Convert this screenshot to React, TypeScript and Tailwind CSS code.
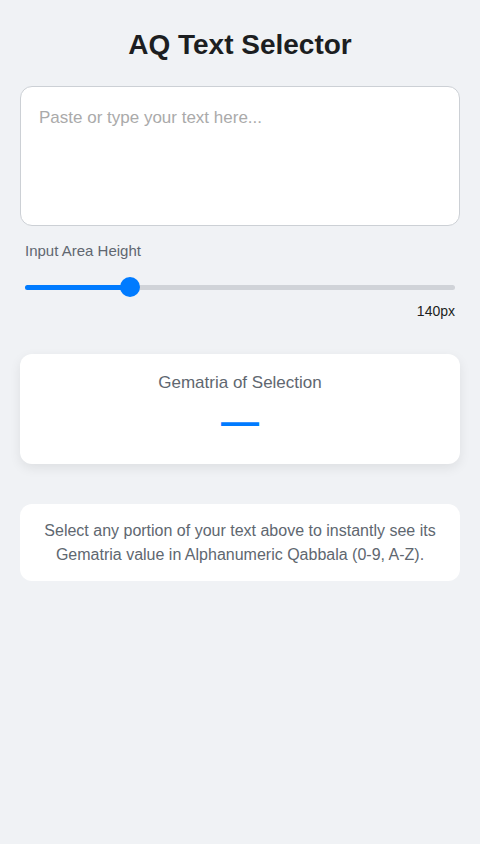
import { useState } from "react";

const MIN = 50;
const MAX = 418;

export default function App() {
  const [height, setHeight] = useState(140);
  const pct = ((height - MIN) / (MAX - MIN)) * 100;

  return (
    <div className="min-h-screen bg-[#f0f2f5] px-5 pt-[26px] font-['Liberation_Sans',Arial,sans-serif]">
      <h1 className="text-center text-[28px] font-bold leading-[38px] text-[#1c1e21]">
        AQ Text Selector
      </h1>

      <textarea
        placeholder="Paste or type your text here..."
        style={{ height }}
        className="mt-[22px] block w-full resize-none rounded-xl border border-[#ccd0d5] bg-white px-[18px] pb-[18px] pt-[19px] text-[17px] leading-6 text-[#1c1e21] outline-none placeholder:text-[#aaaaaa]"
      />

      <div className="px-[5px] pt-[15px]">
        <label className="block text-[15px] leading-5 text-[#606770]">
          Input Area Height
        </label>
        <div className="relative mt-[16px] h-5">
          <div className="absolute left-0 right-0 top-[8px] h-[5px] rounded-full bg-[#d0d3d8]" />
          <div
            className="absolute left-0 top-[8px] h-[5px] rounded-full bg-[#007bff]"
            style={{ width: `${pct}%` }}
          />
          <div
            className="absolute top-0 h-5 w-5 -translate-x-1/2 rounded-full bg-[#007bff]"
            style={{ left: `${pct}%` }}
          />
          <input
            type="range"
            min={MIN}
            max={MAX}
            value={height}
            onChange={(e) => setHeight(Number(e.target.value))}
            className="absolute inset-0 w-full opacity-0"
          />
        </div>
        <div className="mt-[4px] text-right text-[14px] leading-5 text-[#1c1e21]">
          {height}px
        </div>
      </div>

      <div className="mt-[33px] rounded-xl bg-white px-5 pb-[20px] pt-[17px] text-center shadow-[0_4px_12px_rgba(0,0,0,0.08)]">
        <div className="text-[17px] leading-6 text-[#606770]">Gematria of Selection</div>
        <div className="mt-[5px] text-[38px] font-bold leading-[44px] text-[#007bff]">—</div>
      </div>

      <div className="mt-[40px] rounded-xl bg-white px-5 pb-[14px] pt-[15px] text-center text-[16px] leading-6 text-[#606770]">
        Select any portion of your text above to instantly see its Gematria value in
        Alphanumeric Qabbala (0-9, A-Z).
      </div>
    </div>
  );
}
